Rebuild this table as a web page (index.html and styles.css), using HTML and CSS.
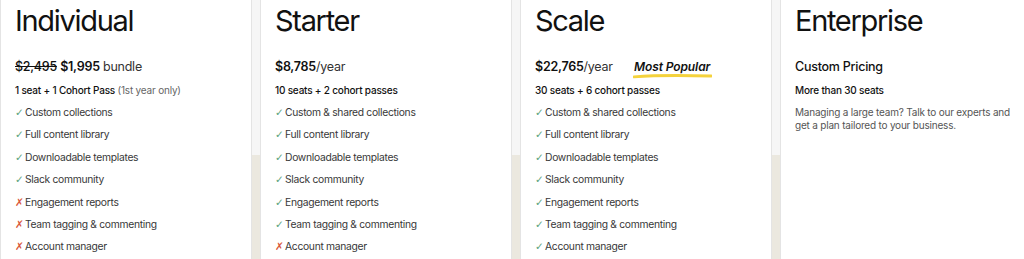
FILE: index.html
```html
<!DOCTYPE html>
<html lang="en">
<head>
  <meta charset="UTF-8">
  <meta name="viewport" content="width=device-width, initial-scale=1.0">
  <title>Plans &amp; Pricing</title>
  <link rel="stylesheet" href="styles.css">
</head>
<body>
  <div class="pricing">
    <div class="plan">
      <h2 class="plan-name">Individual</h2>
      <p class="plan-price"><s class="old">$2,495</s> <b>$1,995</b> <span class="unit">bundle</span></p>
      <p class="plan-seats">1 seat + 1 Cohort Pass <span class="muted">(1st year only)</span></p>
      <ul class="features">
        <li class="yes">Custom collections</li>
        <li class="yes">Full content library</li>
        <li class="yes">Downloadable templates</li>
        <li class="yes">Slack community</li>
        <li class="no">Engagement reports</li>
        <li class="no">Team tagging &amp; commenting</li>
        <li class="no">Account manager</li>
      </ul>
    </div>

    <div class="plan">
      <h2 class="plan-name">Starter</h2>
      <p class="plan-price"><b>$8,785</b><span class="unit">/year</span></p>
      <p class="plan-seats">10 seats + 2 cohort passes</p>
      <ul class="features">
        <li class="yes">Custom &amp; shared collections</li>
        <li class="yes">Full content library</li>
        <li class="yes">Downloadable templates</li>
        <li class="yes">Slack community</li>
        <li class="yes">Engagement reports</li>
        <li class="yes">Team tagging &amp; commenting</li>
        <li class="no">Account manager</li>
      </ul>
    </div>

    <div class="plan">
      <h2 class="plan-name">Scale</h2>
      <p class="plan-price"><b>$22,765</b><span class="unit">/year</span>
        <span class="popular">Most Popular
          <svg class="popular-mark" viewBox="0 0 80 6" preserveAspectRatio="none">
            <path d="M1 3.8 C 20 2.4, 50 2.2, 79 3.0" fill="none" stroke="#f4d23c" stroke-width="2.8" stroke-linecap="round"/>
          </svg>
        </span>
      </p>
      <p class="plan-seats">30 seats + 6 cohort passes</p>
      <ul class="features">
        <li class="yes">Custom &amp; shared collections</li>
        <li class="yes">Full content library</li>
        <li class="yes">Downloadable templates</li>
        <li class="yes">Slack community</li>
        <li class="yes">Engagement reports</li>
        <li class="yes">Team tagging &amp; commenting</li>
        <li class="yes">Account manager</li>
      </ul>
    </div>

    <div class="plan">
      <h2 class="plan-name">Enterprise</h2>
      <p class="plan-price plan-price--custom">Custom Pricing</p>
      <p class="plan-seats">More than 30 seats</p>
      <p class="plan-desc">Managing a large team? Talk to our experts and get a plan tailored to your business.</p>
    </div>
  </div>
</body>
</html>
```

FILE: styles.css
```css
body {
  margin: 0;
  padding: 0;
  overflow: hidden;
  height: 259px;
  font-family: 'Inter', 'Liberation Sans', sans-serif;
  color: #111;
  background: linear-gradient(#f6f6f6 155px, #ebe8df 155px);
}

.pricing {
  display: grid;
  grid-template-columns: repeat(4, 252px);
  gap: 8px;
  height: 259px;
}

.plan {
  background: #fff;
  border-left: 1px solid #e4e4e4;
  border-right: 1px solid #e4e4e4;
  padding: 0 14px;
}

.plan-name {
  margin: 0;
  padding-top: 1px;
  font-size: 29px;
  font-weight: 400;
  line-height: 40px;
  letter-spacing: -1.3px;
}

.plan-price {
  margin: 16px 0 0;
  font-size: 12.5px;
  line-height: 20px;
  letter-spacing: -0.25px;
  color: #111;
}

.plan-price b {
  font-weight: 600;
}

.plan-price .old {
  font-weight: 500;
}

.plan-price .unit {
  color: #333;
}

.plan-price--custom {
  font-weight: 500;
}

.popular {
  position: relative;
  margin-left: 18px;
  font-size: 12px;
  font-style: italic;
  font-weight: 600;
  letter-spacing: -0.1px;
}

.popular-mark {
  position: absolute;
  left: -1px;
  bottom: -5px;
  width: calc(100% + 3px);
  height: 6px;
}

.plan-seats {
  margin: 5px 0 0;
  font-size: 10px;
  line-height: 16px;
  font-weight: 500;
  letter-spacing: -0.2px;
}

.plan-seats .muted {
  font-weight: 400;
  color: #666;
}

.features {
  list-style: none;
  margin: 3px 0 0;
  padding: 0;
}

.features li {
  display: flex;
  align-items: baseline;
  font-size: 10.3px;
  line-height: 22.4px;
  letter-spacing: -0.3px;
  color: #383838;
}

.features li::before {
  flex: none;
  width: 10px;
  font-family: 'DejaVu Sans', sans-serif;
  font-size: 10.5px;
  line-height: 1;
}

.features .yes::before {
  content: "\2713";
  color: #5ea37c;
}

.features .no::before {
  content: "\2717";
  color: #d9583b;
}

.plan-desc {
  margin: 8px 0 0;
  font-size: 10px;
  line-height: 13.4px;
  letter-spacing: -0.2px;
  color: #555;
}
```
